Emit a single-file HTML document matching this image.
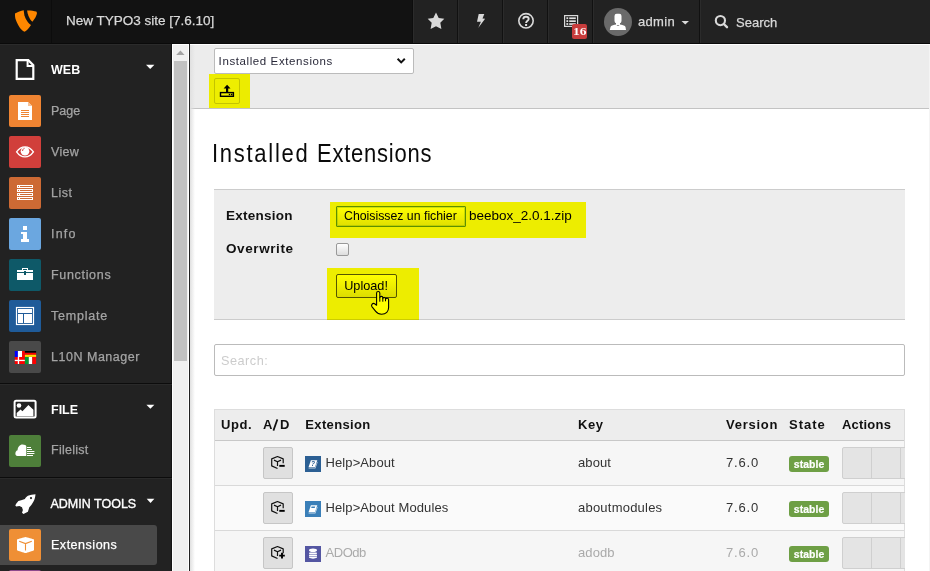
<!DOCTYPE html>
<html><head><meta charset="utf-8">
<style>
*{box-sizing:border-box}
html,body{margin:0;padding:0}
body{width:930px;height:571px;overflow:hidden;position:relative;background:#fff;font-family:"Liberation Sans",sans-serif}
.a{position:absolute}
.t{position:absolute;white-space:nowrap;line-height:1}
svg{position:absolute;overflow:visible}
</style></head><body>

<!-- TOPBAR -->
<div class="a" style="left:0;top:0;width:930px;height:44px;background:#121212"></div>
<div class="a" style="left:0;top:43px;width:930px;height:1px;background:#0a0a0a"></div>
<div class="a" style="left:51px;top:0;width:1px;height:43px;background:#0c0c0c"></div>
<svg style="left:0;top:0" width="52" height="44"><path fill="#ff8700" d="M15.0,13.6 C17.5,11.8 21,10.6 23.7,10.2 C24,13 24.6,16.1 24.6,16.1 C25.2,18 26,19.5 26.8,20.6 C28,22.5 29.6,24.2 31.0,25.1 C29,28.2 26.6,30.9 24.6,31.8 C22.5,31 20.5,29 19.5,27.3 C17.5,24 15.8,20.5 15.3,18.3 C15,16.8 14.9,15 15.0,13.6 Z"/><path fill="#ff8700" d="M27.1,10.5 C30.5,10.4 34,10.8 36.3,11.6 C36.8,12.2 37,13 36.9,13.8 C36.2,16.5 34.4,19.5 32.4,21.7 C30.6,20.4 29.4,18.3 28.5,16.1 C27.8,14.3 27.3,12.4 27.1,10.5 Z"/></svg>
<div class="t" style="left:66px;top:13.5px;font-size:13.5px;color:#d9d9d9;-webkit-text-stroke:0.25px #d9d9d9">New TYPO3 site [7.6.10]</div>

<div class="a" style="left:413px;top:0;width:517px;height:43px;background:#222"></div>
<div class="a" style="left:412px;top:0;width:1px;height:43px;background:#0d0d0d"></div>
<div class="a" style="left:413px;top:0;width:1px;height:43px;background:#2b2b2b"></div>
<div class="a" style="left:457px;top:0;width:1px;height:43px;background:#111"></div>
<div class="a" style="left:458px;top:0;width:1px;height:43px;background:#2b2b2b"></div>
<div class="a" style="left:502px;top:0;width:1px;height:43px;background:#111"></div>
<div class="a" style="left:503px;top:0;width:1px;height:43px;background:#2b2b2b"></div>
<div class="a" style="left:547px;top:0;width:1px;height:43px;background:#111"></div>
<div class="a" style="left:548px;top:0;width:1px;height:43px;background:#2b2b2b"></div>
<div class="a" style="left:592px;top:0;width:1px;height:43px;background:#111"></div>
<div class="a" style="left:593px;top:0;width:1px;height:43px;background:#2b2b2b"></div>
<div class="a" style="left:699px;top:0;width:1px;height:43px;background:#111"></div>
<div class="a" style="left:700px;top:0;width:1px;height:43px;background:#2b2b2b"></div>

<!-- star -->
<svg style="left:0;top:0" width="1" height="1"><path fill="#d9d9d9" d="M436,12.6 L438.7,17.9 L444.3,18.7 L440.3,22.8 L441.4,29 L436,26.2 L430.6,29 L431.7,22.8 L427.7,18.7 L433.3,17.9 Z"/></svg>
<!-- bolt -->
<svg style="left:0;top:0" width="1" height="1"><path fill="#d9d9d9" d="M478.7,14 L484.3,14 L482.5,18.4 L485.1,18.8 L478.2,27.9 L480.9,21.7 L477,21.7 Z"/></svg>
<!-- help -->
<svg style="left:0;top:0" width="1" height="1"><circle cx="526" cy="20.8" r="7.2" fill="none" stroke="#d9d9d9" stroke-width="1.6"/><path fill="none" stroke="#e0e0e0" stroke-width="1.9" d="M523.3,19.2 C523.3,17.6 524.5,16.8 526,16.8 C527.6,16.8 528.7,17.7 528.7,18.9 C528.7,20.6 526.1,20.9 526.1,22.9"/><rect x="525.1" y="24" width="2" height="2" fill="#e0e0e0"/></svg>
<!-- list -->
<svg style="left:0;top:0" width="1" height="1"><rect x="564.6" y="15.6" width="13" height="10.8" fill="none" stroke="#d9d9d9" stroke-width="1.2"/><rect x="566.4" y="17.3" width="1.8" height="1.8" fill="#e0e0e0"/><rect x="566.4" y="20.2" width="1.8" height="1.8" fill="#e0e0e0"/><rect x="566.4" y="23.1" width="1.8" height="1.8" fill="#e0e0e0"/><rect x="569.2" y="17.4" width="6.6" height="1.7" fill="#e0e0e0"/><rect x="569.2" y="20.3" width="6.6" height="1.7" fill="#e0e0e0"/><rect x="569.2" y="23.2" width="6.6" height="1.7" fill="#e0e0e0"/></svg>
<div class="a" style="left:572px;top:24px;width:15px;height:15px;background:#c83c3c;border-radius:2px"></div>
<div class="t" style="left:573.4px;top:27.5px;font-family:'Liberation Serif',serif;font-weight:700;font-size:9.5px;color:#fff;transform:scaleX(1.42);transform-origin:0 0">16</div>
<!-- avatar -->
<div class="a" style="left:604px;top:8px;width:28px;height:28px;border-radius:50%;background:#6a6a6a"></div>
<svg style="left:0;top:0" width="1" height="1"><rect x="614.5" y="13.8" width="7" height="9.4" rx="2.2" fill="#fff"/><rect x="616" y="21" width="4" height="4" fill="#fff"/><path fill="#fff" d="M609.8,29.9 L610.5,27 C611,25.8 613,25 615.5,24.6 L618,26 L620.5,24.6 C623,25 625,25.8 625.5,27 L626,29.9 Z"/></svg>
<div class="t" style="left:638px;top:15px;font-size:13px;color:#d9d9d9;-webkit-text-stroke:0.25px #d9d9d9;letter-spacing:0.3px">admin</div>
<svg style="left:0;top:0" width="1" height="1"><path fill="#d9d9d9" d="M681.5,21 L689,21 L685.25,24.6 Z"/></svg>
<!-- search -->
<svg style="left:0;top:0" width="1" height="1"><circle cx="720.4" cy="20.6" r="4.6" fill="none" stroke="#d9d9d9" stroke-width="2.1"/><path d="M723.8,24 L727,27.2" stroke="#d9d9d9" stroke-width="2.4" stroke-linecap="round"/></svg>
<div class="t" style="left:736px;top:16px;font-size:13px;color:#d9d9d9;-webkit-text-stroke:0.25px #d9d9d9">Search</div>

<!-- SIDEBAR -->
<div class="a" style="left:0;top:44px;width:172px;height:527px;background:#222"></div>
<div class="a" style="left:0;top:44px;width:172px;height:1px;background:#2b2b2b"></div>
<div class="a" style="left:171px;top:44px;width:1px;height:527px;background:#151515"></div>

<!-- WEB -->
<svg style="left:0;top:0" width="1" height="1"><path fill="none" stroke="#fff" stroke-width="2.2" stroke-linejoin="miter" d="M16.7,60.1 L28.3,60.1 L33.3,65.1 L33.3,78.9 L16.7,78.9 Z"/><path fill="none" stroke="#fff" stroke-width="2" d="M27.6,60 L27.6,65.9 L33.5,65.9"/></svg>
<div class="t" style="left:51px;top:63.5px;font-size:12.5px;font-weight:700;color:#fff">WEB</div>
<svg style="left:0;top:0" width="1" height="1"><path fill="#fff" d="M146,64.7 L154.4,64.7 L150.2,69 Z"/></svg>

<!-- modules -->
<div class="a" style="left:9px;top:95px;width:32px;height:32px;background:#ef8432;border-radius:2px"></div>
<div class="t" style="left:51px;top:104.5px;font-size:12.5px;color:#a4a4a4;-webkit-text-stroke:0.25px #a4a4a4;letter-spacing:0.0px">Page</div>
<div class="a" style="left:9px;top:136px;width:32px;height:32px;background:#d13f3b;border-radius:2px"></div>
<div class="t" style="left:51px;top:145.5px;font-size:12.5px;color:#a4a4a4;-webkit-text-stroke:0.25px #a4a4a4;letter-spacing:0.3px">View</div>
<div class="a" style="left:9px;top:177px;width:32px;height:32px;background:#cd6a34;border-radius:2px"></div>
<div class="t" style="left:51px;top:186.5px;font-size:12.5px;color:#a4a4a4;-webkit-text-stroke:0.25px #a4a4a4;letter-spacing:0.5px">List</div>
<div class="a" style="left:9px;top:218px;width:32px;height:32px;background:#6ba7e0;border-radius:2px"></div>
<div class="t" style="left:51px;top:227.5px;font-size:12.5px;color:#a4a4a4;-webkit-text-stroke:0.25px #a4a4a4;letter-spacing:1.2px">Info</div>
<div class="a" style="left:9px;top:259px;width:32px;height:32px;background:#0e5968;border-radius:2px"></div>
<div class="t" style="left:51px;top:268.5px;font-size:12.5px;color:#a4a4a4;-webkit-text-stroke:0.25px #a4a4a4;letter-spacing:0.68px">Functions</div>
<div class="a" style="left:9px;top:300px;width:32px;height:32px;background:#1f5b99;border-radius:2px"></div>
<div class="t" style="left:51px;top:309.5px;font-size:12.5px;color:#a4a4a4;-webkit-text-stroke:0.25px #a4a4a4;letter-spacing:0.77px">Template</div>
<div class="a" style="left:9px;top:341px;width:32px;height:32px;background:#494949;border-radius:2px"></div>
<div class="t" style="left:51px;top:350.5px;font-size:12.5px;color:#a4a4a4;-webkit-text-stroke:0.25px #a4a4a4;letter-spacing:0.52px">L10N Manager</div>

<div class="a" style="left:0;top:383px;width:172px;height:1px;background:#0c0c0c"></div><div class="a" style="left:0;top:384px;width:172px;height:1px;background:#2a2a2a"></div>
<!-- FILE -->
<div class="t" style="left:51px;top:403.5px;font-size:12.5px;font-weight:700;color:#fff">FILE</div>
<svg style="left:0;top:0" width="1" height="1"><path fill="#fff" d="M146.4,404.7 L154.4,404.7 L150.4,408.8 Z"/></svg>
<div class="a" style="left:9px;top:435px;width:32px;height:32px;background:#4e7f3a;border-radius:2px"></div>
<div class="t" style="left:51px;top:444px;font-size:12.5px;color:#a4a4a4;-webkit-text-stroke:0.25px #a4a4a4;letter-spacing:0.25px">Filelist</div>
<div class="a" style="left:0;top:477px;width:172px;height:1px;background:#0c0c0c"></div><div class="a" style="left:0;top:478px;width:172px;height:1px;background:#2a2a2a"></div>
<!-- ADMIN -->
<div class="t" style="left:50.5px;top:497.8px;font-size:12.5px;color:#fff;-webkit-text-stroke:0.35px #fff">ADMIN TOOLS</div>
<svg style="left:0;top:0" width="1" height="1"><path fill="#fff" d="M146.7,498.8 L154.4,498.8 L150.5,503 Z"/></svg>
<div class="a" style="left:0;top:525px;width:157px;height:40px;background:#494949;border-radius:0 3px 3px 0"></div>
<div class="a" style="left:9px;top:529px;width:32px;height:32px;background:#ef8f35;border-radius:2px"></div>
<div class="t" style="left:51px;top:538.9px;font-size:12.5px;color:#fff;-webkit-text-stroke:0.25px #fff;letter-spacing:0.52px">Extensions</div>
<div class="a" style="left:9px;top:570px;width:32px;height:32px;background:#8f4a8d;border-radius:2px"></div>

<!-- SCROLLBAR -->
<div class="a" style="left:172px;top:44px;width:17px;height:527px;background:#fff"></div>
<div class="a" style="left:173px;top:45px;width:15px;height:526px;background:#f0f0f0"></div>
<svg style="left:0;top:0" width="1" height="1"><path fill="#a3a3a3" d="M176.2,55 L184.6,55 L180.4,50.6 Z"/></svg>
<div class="a" style="left:174px;top:61px;width:13px;height:300px;background:#c1c1c1"></div>
<div class="a" style="left:189px;top:44px;width:1px;height:527px;background:#222"></div>

<!-- CONTENT -->
<div class="a" style="left:190px;top:44px;width:740px;height:527px;background:#fff"></div>
<div class="a" style="left:190px;top:44px;width:740px;height:64px;background:#ececec"></div>
<div class="a" style="left:190px;top:44px;width:740px;height:1px;background:#fff"></div>
<div class="a" style="left:190px;top:108px;width:740px;height:1px;background:#c3c3c3"></div>
<div class="a" style="left:190px;top:45px;width:5px;height:526px;background:linear-gradient(to right,#e0e0e0,rgba(255,255,255,0))"></div>
<div class="a" style="left:929px;top:45px;width:1px;height:526px;background:#f4f4f4"></div>


<!-- DOCHEADER -->
<div class="a" style="left:214px;top:48px;width:200px;height:26px;background:#fff;border:1px solid #bbb;border-radius:2px"></div>
<div class="t" style="left:218.6px;top:55.6px;font-size:11.5px;color:#2a2a3a;letter-spacing:0.6px">Installed Extensions</div>
<svg style="left:0;top:0" width="1" height="1"><path fill="none" stroke="#111" stroke-width="2" d="M397.6,58.8 L401.2,62.4 L404.8,58.8"/></svg>
<div class="a" style="left:214px;top:78px;width:26px;height:26px;background:#eee;border:1px solid #c4c4c4;border-radius:2px"></div>
<svg style="left:0;top:0" width="1" height="1"><path fill="#000" d="M223.6,88.6 L227.1,84.7 L230.5,88.6 L228.2,88.6 L228.2,92.2 L226,92.2 L226,88.6 Z"/><rect x="220.5" y="92.6" width="12.9" height="3.7" fill="none" stroke="#000" stroke-width="1.4"/><rect x="228.8" y="93.8" width="1.4" height="1.4" fill="#000"/><rect x="231" y="93.8" width="1.4" height="1.4" fill="#000"/></svg>

<!-- TITLE -->
<div class="t" style="left:212.4px;top:141px;font-size:25px;color:#0a0a0a;letter-spacing:1.96px;transform:scaleX(0.88);transform-origin:0 0">Installed</div><div class="t" style="left:317.2px;top:141px;font-size:25px;color:#0a0a0a;letter-spacing:0.87px;transform:scaleX(0.88);transform-origin:0 0">Extensions</div>

<!-- PANEL -->
<div class="a" style="left:214px;top:189px;width:691px;height:131px;background:#ededed;border-top:1px solid #ccc;border-bottom:1px solid #ccc"></div>
<div class="t" style="left:226px;top:208.8px;font-size:13.5px;font-weight:700;color:#111;letter-spacing:0.25px">Extension</div>
<div class="t" style="left:226px;top:242px;font-size:13.5px;font-weight:700;color:#111;letter-spacing:0.6px">Overwrite</div>
<div class="a" style="left:336px;top:206px;width:130px;height:21px;border:1px solid #5c9010;border-radius:1px;box-shadow:inset 0 0 0 1px rgba(120,170,60,0.35);background:linear-gradient(#fff,#e0e0e0)"></div>
<div class="t" style="left:344px;top:210px;font-size:12.3px;color:#000">Choisissez un fichier</div>
<div class="t" style="left:469px;top:209px;font-size:13.5px;color:#000">beebox_2.0.1.zip</div>
<div class="a" style="left:336px;top:243px;width:13px;height:13px;border:1px solid #999;border-radius:2px;background:linear-gradient(#fff,#ddd)"></div>
<div class="a" style="left:336px;top:274px;width:61px;height:24px;border:1px solid #555;border-radius:2px;background:linear-gradient(#fff,#ddd)"></div>
<div class="t" style="left:344.2px;top:280.1px;font-size:12.7px;color:#000">Upload!</div>

<!-- SEARCH -->
<div class="a" style="left:214px;top:344px;width:691px;height:32px;background:#fff;border:1px solid #bbb;border-radius:2px"></div>
<div class="t" style="left:221px;top:354.6px;font-size:12.7px;color:#ccc;letter-spacing:0.5px">Search:</div>

<!-- TABLE -->
<div class="a" style="left:214px;top:409px;width:691px;height:162px;background:#f5f5f5;border-left:1px solid #ddd;border-right:1px solid #ddd;border-top:1px solid #ddd"></div>
<div class="a" style="left:215px;top:410px;width:689px;height:31px;background:#ededed;border-bottom:1px solid #c8c8c8"></div>
<div class="a" style="left:215px;top:441px;width:689px;height:44px;background:#f6f6f6"></div><div class="a" style="left:215px;top:486px;width:689px;height:44px;background:#fafafa"></div><div class="a" style="left:215px;top:531px;width:689px;height:40px;background:#f6f6f6"></div>
<div class="a" style="left:215px;top:485px;width:689px;height:1px;background:#d9d9d9"></div>
<div class="a" style="left:215px;top:530px;width:689px;height:1px;background:#d9d9d9"></div>


<div class="t" style="left:221px;top:418.3px;font-size:13px;font-weight:700;color:#111;letter-spacing:0.55px">Upd.</div>
<div class="t" style="left:263px;top:418.3px;font-size:13px;font-weight:700;color:#111">A</div><svg style="left:0;top:0" width="1" height="1"><path d="M273.4,430.6 L277.4,419.4" stroke="#111" stroke-width="1.7"/></svg><div class="t" style="left:280px;top:418.3px;font-size:13px;font-weight:700;color:#111">D</div>
<div class="t" style="left:305.3px;top:418.3px;font-size:13px;font-weight:700;color:#111;letter-spacing:0.35px">Extension</div>
<div class="t" style="left:578px;top:418.3px;font-size:13px;font-weight:700;color:#111;letter-spacing:0.6px">Key</div>
<div class="t" style="left:726px;top:418.3px;font-size:13px;font-weight:700;color:#111;letter-spacing:0.73px">Version</div>
<div class="t" style="left:789px;top:418.3px;font-size:13px;font-weight:700;color:#111;letter-spacing:1.0px">State</div>
<div class="t" style="left:842px;top:418.3px;font-size:13px;font-weight:700;color:#111;letter-spacing:0.2px">Actions</div>

<div class="a" style="left:263px;top:447px;width:30px;height:32px;background:#e0e0e0;border:1px solid #c6c6c6;border-radius:2px"></div>
<svg style="left:0;top:0px" width="1" height="1"><path fill="none" stroke="#111" stroke-width="1.2" stroke-linejoin="round" d="M283.2,463.2 L283.2,458.9 L277.5,456.5 L271.7,458.9 L271.7,465.9 L277.5,468.5 M274,460.1 L277.5,461.8 L281,460.1 M277.5,461.8 L277.5,465.9"/><rect x="279.3" y="464.9" width="5.4" height="1.9" fill="#000"/></svg>
<div class="a" style="left:305px;top:456px;width:16px;height:16px;background:#2b5f93"></div>
<svg style="left:0;top:0px" width="1" height="1"><path fill="#fff" d="M310.9,460.3 L317.3,460.3 L315,467.1 L308.6,467.1 Z"/><path fill="#fff" opacity="0.75" d="M308.6,467.4 L315,467.4 L317.4,461.4 L317.6,462.4 L315.4,468.6 L308.6,468.6 Z"/><text x="313" y="466" text-anchor="middle" font-family="Liberation Sans" font-weight="700" font-style="italic" font-size="6.5" fill="#2b5f93">?</text></svg>
<div class="t" style="left:325.5px;top:455.9px;font-size:13px;color:#333;letter-spacing:0.1px">Help&gt;About</div>
<div class="t" style="left:578px;top:455.9px;font-size:13px;color:#333;letter-spacing:0.1px">about</div>
<div class="t" style="left:726px;top:455.9px;font-size:13px;color:#333;letter-spacing:0.85px">7.6.0</div>
<div class="a" style="left:789px;top:456px;width:40px;height:16px;background:#6e9f45;border-radius:3px"></div>
<div class="t" style="left:793.8px;top:460px;font-size:10.4px;font-weight:700;color:#fff;-webkit-text-stroke:0.2px #fff;letter-spacing:0.1px">stable</div>
<div class="a" style="left:842px;top:447px;width:80px;height:32px;background:#e4e4e4;border:1px solid #cfcfcf;border-radius:2px"></div>
<div class="a" style="left:871px;top:447px;width:1px;height:32px;background:#cfcfcf"></div>
<div class="a" style="left:900px;top:447px;width:1px;height:32px;background:#cfcfcf"></div>

<div class="a" style="left:263px;top:492px;width:30px;height:32px;background:#e0e0e0;border:1px solid #c6c6c6;border-radius:2px"></div>
<svg style="left:0;top:45px" width="1" height="1"><path fill="none" stroke="#111" stroke-width="1.2" stroke-linejoin="round" d="M283.2,463.2 L283.2,458.9 L277.5,456.5 L271.7,458.9 L271.7,465.9 L277.5,468.5 M274,460.1 L277.5,461.8 L281,460.1 M277.5,461.8 L277.5,465.9"/><rect x="279.3" y="464.9" width="5.4" height="1.9" fill="#000"/></svg>
<div class="a" style="left:305px;top:501px;width:16px;height:16px;background:#3a7fb8"></div>
<svg style="left:0;top:45px" width="1" height="1"><path fill="#fff" d="M310.9,460.3 L317.3,460.3 L315,467.1 L308.6,467.1 Z"/><path fill="#fff" opacity="0.75" d="M308.6,467.4 L315,467.4 L317.4,461.4 L317.6,462.4 L315.4,468.6 L308.6,468.6 Z"/><rect x="311.6" y="461.6" width="3.6" height="1.4" fill="#3a7fb8" transform="skewX(-18) translate(150,0)"/></svg>
<div class="t" style="left:325.5px;top:500.9px;font-size:13px;color:#333;letter-spacing:0.1px">Help&gt;About Modules</div>
<div class="t" style="left:578px;top:500.9px;font-size:13px;color:#333;letter-spacing:0.22px">aboutmodules</div>
<div class="t" style="left:726px;top:500.9px;font-size:13px;color:#333;letter-spacing:0.85px">7.6.0</div>
<div class="a" style="left:789px;top:501px;width:40px;height:16px;background:#6e9f45;border-radius:3px"></div>
<div class="t" style="left:793.8px;top:505px;font-size:10.4px;font-weight:700;color:#fff;-webkit-text-stroke:0.2px #fff;letter-spacing:0.1px">stable</div>
<div class="a" style="left:842px;top:492px;width:80px;height:32px;background:#e4e4e4;border:1px solid #cfcfcf;border-radius:2px"></div>
<div class="a" style="left:871px;top:492px;width:1px;height:32px;background:#cfcfcf"></div>
<div class="a" style="left:900px;top:492px;width:1px;height:32px;background:#cfcfcf"></div>

<div class="a" style="left:263px;top:537px;width:30px;height:32px;background:#e0e0e0;border:1px solid #c6c6c6;border-radius:2px"></div>
<svg style="left:0;top:90px" width="1" height="1"><path fill="none" stroke="#111" stroke-width="1.2" stroke-linejoin="round" d="M283.2,463.2 L283.2,458.9 L277.5,456.5 L271.7,458.9 L271.7,465.9 L277.5,468.5 M274,460.1 L277.5,461.8 L281,460.1 M277.5,461.8 L277.5,465.9"/><path d="M282,462.8 L282,468.4 M279.2,465.6 L284.8,465.6" stroke="#000" stroke-width="1.9"/></svg>
<div class="a" style="left:305px;top:546px;width:16px;height:16px;background:#5456a2"></div>
<svg style="left:0;top:90px" width="1" height="1"><ellipse cx="313" cy="460.3" rx="4" ry="1.8" fill="#fff"/><rect x="309" y="462.5" width="8" height="1.5" rx="0.7" fill="#fff"/><rect x="309" y="464.6" width="8" height="1.5" rx="0.7" fill="#fff"/><path fill="#fff" d="M309,466.6 L317,466.6 L317,467.5 C315,469 311,469 309,467.5 Z"/></svg>
<div class="t" style="left:325.5px;top:545.9px;font-size:13px;color:#aaa;letter-spacing:-0.45px">ADOdb</div>
<div class="t" style="left:578px;top:545.9px;font-size:13px;color:#aaa;letter-spacing:0.1px">adodb</div>
<div class="t" style="left:726px;top:545.9px;font-size:13px;color:#aaa;letter-spacing:0.85px">7.6.0</div>
<div class="a" style="left:789px;top:546px;width:40px;height:16px;background:#6e9f45;border-radius:3px"></div>
<div class="t" style="left:793.8px;top:550px;font-size:10.4px;font-weight:700;color:#fff;-webkit-text-stroke:0.2px #fff;letter-spacing:0.1px">stable</div>
<div class="a" style="left:842px;top:537px;width:80px;height:32px;background:#e4e4e4;border:1px solid #cfcfcf;border-radius:2px"></div>
<div class="a" style="left:871px;top:537px;width:1px;height:32px;background:#cfcfcf"></div>
<div class="a" style="left:900px;top:537px;width:1px;height:32px;background:#cfcfcf"></div>

<div class="a" style="left:905px;top:409px;width:24px;height:162px;background:#fff"></div>

<!-- sidebar icons -->
<svg style="left:0;top:0" width="1" height="1">
<path fill="#fff" d="M18,102 L28,102 L32,106 L32,120 L18,120 Z"/>
<path fill="#f6c197" d="M28,102 L32,106 L28,106 Z"/>
<rect x="21" y="110" width="8" height="1" fill="#ef8432"/>
<rect x="21" y="112" width="8" height="1" fill="#ef8432"/>
<rect x="21" y="114" width="8" height="1" fill="#ef8432"/>
<rect x="21" y="116" width="8" height="1" fill="#ef8432"/>
</svg>
<svg style="left:0;top:0" width="1" height="1">
<path fill="none" stroke="#fff" stroke-width="1.4" d="M16.6,151.9 C19,148.5 22,146.9 25,146.9 C28,146.9 31,148.5 33.4,151.9 C31,155.3 28,156.9 25,156.9 C22,156.9 19,155.3 16.6,151.9 Z"/><circle cx="25" cy="151.3" r="4.3" fill="#fff"/><path fill="none" stroke="#d13f3b" stroke-width="1" d="M22.6,151 C22.6,149.6 23.3,148.6 24.5,148.3"/></svg>
<svg style="left:0;top:0" width="1" height="1"><rect x="17" y="185" width="16" height="3" fill="#fff"/><rect x="18" y="186" width="1" height="1" fill="#cd6a34"/><rect x="20" y="186" width="12" height="1" fill="#cd6a34"/><rect x="17" y="189" width="16" height="3" fill="#fff"/><rect x="18" y="190" width="1" height="1" fill="#cd6a34"/><rect x="20" y="190" width="12" height="1" fill="#cd6a34"/><rect x="17" y="193" width="16" height="3" fill="#fff"/><rect x="18" y="194" width="1" height="1" fill="#cd6a34"/><rect x="20" y="194" width="12" height="1" fill="#cd6a34"/><rect x="17" y="197" width="16" height="3" fill="#fff"/><rect x="18" y="198" width="1" height="1" fill="#cd6a34"/><rect x="20" y="198" width="12" height="1" fill="#cd6a34"/></svg>
<svg style="left:0;top:0" width="1" height="1" fill="#fff">
<rect x="23" y="226" width="4" height="4"/>
<path d="M21,232 L27,232 L27,239 L29,239 L29,242 L21,242 L21,239 L23,239 L23,234 L21,234 Z"/>
</svg>
<svg style="left:0;top:0" width="1" height="1">
<rect x="22" y="268" width="6" height="2" fill="#fff"/><rect x="23" y="269" width="4" height="1" fill="#0e5968"/><rect x="17" y="270" width="16" height="2" fill="#fff"/><rect x="17" y="273" width="16" height="7" fill="#fff"/><rect x="24" y="271" width="2" height="4" fill="#0e5968"/></svg>
<svg style="left:0;top:0" width="1" height="1">
<rect x="16.5" y="307.5" width="17" height="17" fill="none" stroke="#fff" stroke-width="1.2"/><rect x="18" y="309" width="14" height="4" fill="#fff"/><rect x="18" y="314" width="5" height="9" fill="#fff"/><rect x="24" y="314" width="8" height="9" fill="#fff"/></svg>
<svg style="left:0;top:0" width="1" height="1">
<rect x="14.8" y="351" width="3.1" height="6" fill="#0000ff"/>
<rect x="17.9" y="351" width="4.2" height="6" fill="#fff"/>
<rect x="22.1" y="351" width="2.8" height="6" fill="#ff0000"/>
<rect x="24.9" y="351" width="11.2" height="1.8" fill="#000"/>
<rect x="24.9" y="352.8" width="11.2" height="2" fill="#ff0000"/>
<rect x="24.9" y="354.8" width="11.2" height="2.1" fill="#ffdd00"/>
<rect x="14.8" y="357" width="10.1" height="7" fill="#ff0000"/>
<rect x="17.8" y="357" width="1.3" height="7" fill="#fff"/>
<rect x="14.8" y="359.8" width="10.1" height="1.3" fill="#fff"/>
<rect x="24.9" y="357" width="3.9" height="7" fill="#009933"/>
<rect x="28.8" y="357" width="3.5" height="7" fill="#fff"/>
<rect x="32.3" y="357" width="3.8" height="7" fill="#ff0000"/>
</svg>
<svg style="left:0;top:0" width="1" height="1" fill="#fff">
<path d="M26.3,455.9 L17.5,455.9 C15.8,455.9 15.2,454.5 15.4,453.2 C15.6,451.7 16.5,450.6 17.6,450.3 C17.7,447 19.8,444.5 22.5,444.5 C24.6,444.5 26.1,445.3 26.3,446.3 Z"/>
<rect x="27" y="447" width="4" height="1" /><rect x="27" y="449" width="5" height="1"/><rect x="27" y="451" width="7.4" height="1"/><rect x="27" y="453" width="7.4" height="1"/><rect x="27" y="455" width="6" height="1"/>
</svg>
<svg style="left:0;top:0" width="1" height="1">
<path fill="#fff" d="M25.5,537 C27,537.2 33,539 34,539.5 L34,550.2 C33,550.8 27,552.8 25.5,553 C24,552.8 18,550.8 17,550.2 L17,539.5 C18,539 24,537.2 25.5,537 Z"/>
<path fill="none" stroke="#ef8f35" stroke-width="1.1" d="M19.2,541.3 L25.5,543.6 L31.8,541.3 M25.5,543.6 L25.5,550.6"/>
</svg>
<svg style="left:0;top:0" width="1" height="1">
<rect x="14.6" y="400.8" width="21" height="16.8" rx="1.5" fill="none" stroke="#fff" stroke-width="2"/>
<circle cx="19" cy="405.5" r="2.3" fill="#fff"/>
<path fill="#fff" d="M16.7,413 L20.6,409.5 L22.4,411.2 L28.4,405 L33.4,409.8 L33.4,416.2 L16.7,416.2 Z"/>
</svg>
<svg style="left:0;top:0" width="1" height="1">
<path fill="#fff" d="M35.5,494.2 C33,494.3 30,495 27.9,495.8 C26.5,496.6 25.6,497.7 24.9,498.9 L22,500 L18.4,500.9 C17,502.4 15.8,504 15.3,505.4 L16.2,506.5 L19.5,505.9 L22,507.3 L22.9,510.1 L22,512.7 L23.5,513.9 C25.2,513.3 26.8,512.5 27.9,511.8 L29.3,507.3 C30.5,506.4 32.2,504 33.5,501.5 C34.6,499.6 35.3,497 35.5,494.2 Z"/>
<circle cx="31" cy="498.1" r="1.1" fill="#222"/>
</svg>
<!-- cursor -->
<svg style="left:0;top:0" width="1" height="1">
<path fill="#fff" stroke="#000" stroke-width="1.1" stroke-linejoin="round" d="M376.6,293.1 C376.6,291 379.8,291 379.8,293.1 L379.8,297.6 C380.3,295.9 382.8,295.9 382.8,297.8 L382.8,298.6 C383.2,297 385.5,297 385.5,298.8 L385.5,299.4 C386,297.7 388.6,297.7 388.6,299.8 L388.6,307.6 C388.6,311.4 386,314.2 381.6,314.2 C379,314.2 377.2,313.3 375.7,311.4 L371.9,306.6 C370.9,305.2 372.6,302.6 374.6,303.7 L376.6,305.2 Z"/>
<path fill="none" stroke="#000" stroke-width="1" d="M379.8,297.4 L379.8,301.7 M382.8,298.4 L382.8,301.7 M385.5,299.2 L385.5,301.3"/>
</svg>

<!-- highlights -->
<div class="a" style="left:209px;top:74px;width:41px;height:34px;background:#ffff00;mix-blend-mode:multiply"></div>
<div class="a" style="left:330px;top:202px;width:256px;height:36px;background:#ffff00;mix-blend-mode:multiply"></div>
<div class="a" style="left:327px;top:268px;width:92px;height:52px;background:#ffff00;mix-blend-mode:multiply"></div>

</body></html>
